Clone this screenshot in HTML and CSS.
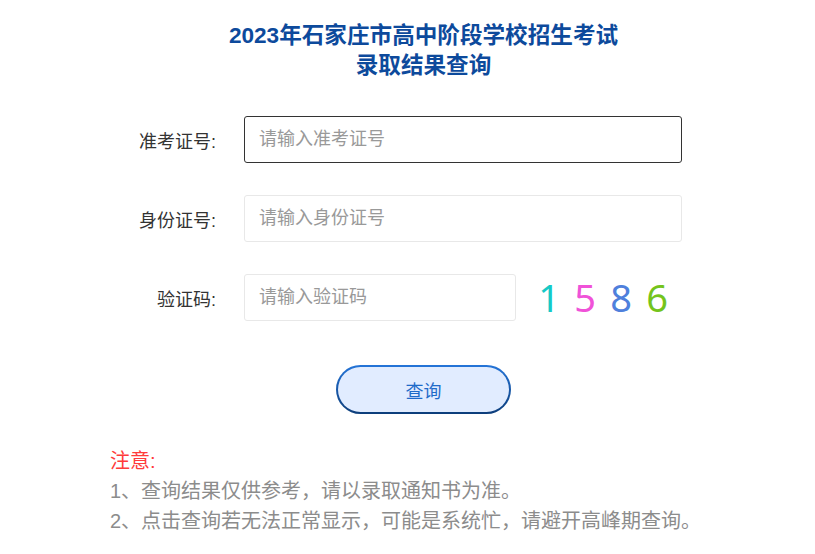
FILE: index.html
```html
<!DOCTYPE html>
<html lang="zh-CN">
<head>
<meta charset="utf-8">
<title>录取结果查询</title>
<link rel="stylesheet" href="styles.css">
</head>
<body>
<div class="page">
  <h1 class="title">2023年石家庄市高中阶段学校招生考试<br>录取结果查询</h1>
  <form class="form">
    <div class="row">
      <label class="label">准考证号:</label>
      <input class="input input-active" type="text" placeholder="请输入准考证号">
    </div>
    <div class="row">
      <label class="label">身份证号:</label>
      <input class="input" type="text" placeholder="请输入身份证号">
    </div>
    <div class="row">
      <label class="label">验证码:</label>
      <input class="input input-short" type="text" placeholder="请输入验证码">
      <div class="captcha">
        <span class="d1">1</span><span class="d2">5</span><span class="d3">8</span><span class="d4">6</span>
      </div>
    </div>
  </form>
  <div class="btn-row">
    <button class="btn" type="button">查询</button>
  </div>
  <div class="notes">
    <p class="notes-title">注意:</p>
    <p>1、查询结果仅供参考，请以录取通知书为准。</p>
    <p>2、点击查询若无法正常显示，可能是系统忙，请避开高峰期查询。</p>
  </div>
</div>
</body>
</html>
```

FILE: styles.css
```css
html, body {
  margin: 0;
  padding: 0;
  background: #ffffff;
}
body {
  font-family: "Liberation Sans", "Noto Sans CJK SC", sans-serif;
}
.page {
  width: 815px;
  box-sizing: border-box;
  padding-top: 21px;
}
.title {
  margin: 0 0 0 32px;
  font-size: 22.6px;
  line-height: 30px;
  font-weight: bold;
  color: #0d4a9c;
  text-align: center;
}
.form {
  margin: 35px 0 0 117px;
  display: flex;
  flex-direction: column;
  gap: 32px;
}
.row {
  display: flex;
  align-items: center;
}
.label {
  width: 99px;
  text-align: right;
  font-size: 18px;
  color: #333;
  margin-right: 28px;
}
.input {
  width: 438px;
  height: 47px;
  box-sizing: border-box;
  border: 1px solid #e8e8e8;
  border-radius: 3px;
  padding: 0 14px;
  font-family: "Liberation Sans", "Noto Sans CJK SC", sans-serif;
  font-size: 18px;
  color: #333;
  outline: none;
}
.input::placeholder {
  color: #999;
}
.input-active {
  border-color: #333;
}
.input-short {
  width: 272px;
}
.captcha {
  display: flex;
  gap: 14px;
  margin-left: 22px;
  font-family: "Noto Sans", "DejaVu Sans", sans-serif;
  font-weight: 400;
  font-size: 38px;
  line-height: 47px;
}
.captcha span {
  width: 22px;
  text-align: center;
}
.d1 { color: #16c9c6; }
.d2 { color: #f052d8; }
.d3 { color: #4f80dc; }
.d4 { color: #74c41c; }
.btn-row {
  margin: 44px 0 0 32px;
  display: flex;
  justify-content: center;
}
.btn {
  width: 175px;
  height: 49px;
  border: 2px solid transparent;
  border-radius: 25px;
  background: linear-gradient(#e1ecff, #e1ecff) padding-box,
              linear-gradient(to bottom, #2474d8, #0c3d7a) border-box;
  color: #1f6bc9;
  font-family: "Liberation Sans", "Noto Sans CJK SC", sans-serif;
  font-size: 18px;
  padding: 0;
}
.notes {
  margin: 32px 0 0 110px;
  font-size: 20px;
  line-height: 30px;
  color: #8c8c8c;
}
.notes p {
  margin: 0;
}
.notes .notes-title {
  color: #ff3b3b;
}
```
